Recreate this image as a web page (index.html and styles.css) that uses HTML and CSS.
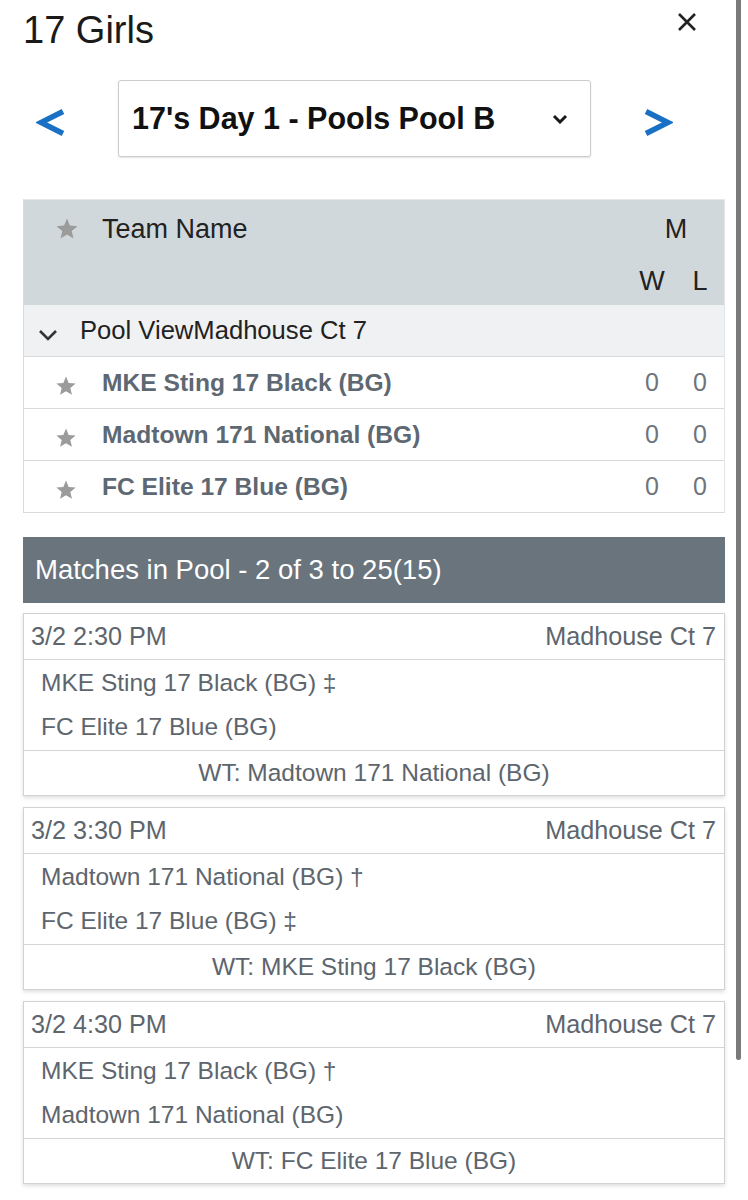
FILE: index.html
```html
<!DOCTYPE html>
<html lang="en">
<head>
<meta charset="utf-8">
<title>17 Girls</title>
<link rel="stylesheet" href="styles.css">
</head>
<body>
<div class="page">
  <div class="scroll-thumb"></div>

  <header class="top">
    <h1 class="title">17 Girls</h1>
    <svg class="close" width="20" height="20" viewBox="0 0 20 20"><path d="M2 2 L18 18 M18 2 L2 18" stroke="#222" stroke-width="2.6" fill="none"/></svg>
  </header>

  <div class="nav">
    <svg class="arrow arrow-left" width="30" height="29" viewBox="0 0 30 29"><polyline points="27,3.5 5,14.5 27,25.5" fill="none" stroke="#1a70c4" stroke-width="5.5" stroke-linejoin="miter"/></svg>
    <div class="select">
      <span class="select-text">17's Day 1 - Pools Pool B</span>
      <svg class="select-chev" width="16" height="10" viewBox="0 0 16 10"><polyline points="2,2 8,8 14,2" fill="none" stroke="#1a1a1a" stroke-width="3"/></svg>
    </div>
    <svg class="arrow arrow-right" width="30" height="29" viewBox="0 0 30 29"><polyline points="3,3.5 25,14.5 3,25.5" fill="none" stroke="#1a70c4" stroke-width="5.5" stroke-linejoin="miter"/></svg>
  </div>

  <div class="standings">
    <div class="thead">
      <div class="thead-row1">
        <span class="star-cell"><svg class="star" width="24" height="24" viewBox="0 0 24 24"><polygon points="12,1.5 14.9,8.6 22.5,9.2 16.7,14.1 18.5,21.6 12,17.6 5.5,21.6 7.3,14.1 1.5,9.2 9.1,8.6"/></svg></span>
        <span class="th-name">Team Name</span>
        <span class="th-m">M</span>
      </div>
      <div class="thead-row2">
        <span class="th-spacer"></span>
        <span class="col th-col">W</span>
        <span class="col th-col">L</span>
      </div>
    </div>

    <div class="pool-row">
      <svg class="pool-chev" width="20" height="12" viewBox="0 0 20 12"><polyline points="2,2 10,10 18,2" fill="none" stroke="#333" stroke-width="2.6"/></svg>
      <span class="pool-text">Pool ViewMadhouse Ct 7</span>
    </div>

    <div class="team-row">
      <span class="star-cell"><svg class="star row-star" width="22" height="22" viewBox="0 0 24 24"><polygon points="12,1.5 14.9,8.6 22.5,9.2 16.7,14.1 18.5,21.6 12,17.6 5.5,21.6 7.3,14.1 1.5,9.2 9.1,8.6"/></svg></span>
      <span class="team-name">MKE Sting 17 Black (BG)</span>
      <span class="col num">0</span>
      <span class="col num">0</span>
    </div>
    <div class="team-row">
      <span class="star-cell"><svg class="star row-star" width="22" height="22" viewBox="0 0 24 24"><polygon points="12,1.5 14.9,8.6 22.5,9.2 16.7,14.1 18.5,21.6 12,17.6 5.5,21.6 7.3,14.1 1.5,9.2 9.1,8.6"/></svg></span>
      <span class="team-name">Madtown 171 National (BG)</span>
      <span class="col num">0</span>
      <span class="col num">0</span>
    </div>
    <div class="team-row">
      <span class="star-cell"><svg class="star row-star" width="22" height="22" viewBox="0 0 24 24"><polygon points="12,1.5 14.9,8.6 22.5,9.2 16.7,14.1 18.5,21.6 12,17.6 5.5,21.6 7.3,14.1 1.5,9.2 9.1,8.6"/></svg></span>
      <span class="team-name">FC Elite 17 Blue (BG)</span>
      <span class="col num">0</span>
      <span class="col num">0</span>
    </div>
  </div>

  <div class="matches-head">Matches in Pool - 2 of 3 to 25(15)</div>

  <div class="match">
    <div class="match-head"><span>3/2 2:30 PM</span><span>Madhouse Ct 7</span></div>
    <div class="match-teams">
      <div class="match-team">MKE Sting 17 Black (BG) ‡</div>
      <div class="match-team">FC Elite 17 Blue (BG)</div>
    </div>
    <div class="match-wt">WT: Madtown 171 National (BG)</div>
  </div>

  <div class="match">
    <div class="match-head"><span>3/2 3:30 PM</span><span>Madhouse Ct 7</span></div>
    <div class="match-teams">
      <div class="match-team">Madtown 171 National (BG) †</div>
      <div class="match-team">FC Elite 17 Blue (BG) ‡</div>
    </div>
    <div class="match-wt">WT: MKE Sting 17 Black (BG)</div>
  </div>

  <div class="match">
    <div class="match-head"><span>3/2 4:30 PM</span><span>Madhouse Ct 7</span></div>
    <div class="match-teams">
      <div class="match-team">MKE Sting 17 Black (BG) †</div>
      <div class="match-team">Madtown 171 National (BG)</div>
    </div>
    <div class="match-wt">WT: FC Elite 17 Blue (BG)</div>
  </div>
</div>
</body>
</html>
```

FILE: styles.css
```css
* { box-sizing: border-box; }

html, body {
  margin: 0;
  padding: 0;
  background: #ffffff;
}

body {
  font-family: "Liberation Sans", Arial, Helvetica, sans-serif;
  color: #1f1f1f;
}

.page {
  position: relative;
  width: 748px;
  min-height: 1200px;
  padding: 0 23px 0 23px;
  overflow: hidden;
}

.scroll-thumb {
  position: absolute;
  top: 0;
  right: 7px;
  width: 5px;
  height: 1060px;
  background: #7a7a7a;
  border-radius: 0 0 3px 3px;
}

/* Top bar */
.top {
  display: flex;
  justify-content: space-between;
  align-items: flex-start;
  height: 60px;
}

.title {
  margin: 0 0 0 0;
  font-size: 38px;
  font-weight: 400;
  line-height: 60px;
  color: #1a1a1a;
}

.close {
  display: block;
  margin-top: 12px;
  margin-right: 28px;
}

/* Navigation */
.nav {
  display: flex;
  align-items: center;
  height: 77px;
  margin-top: 20px;
}

.arrow {
  display: block;
  flex: none;
  margin-top: 8px;
}

.arrow-left { margin-left: 13px; }

.arrow-right { margin-left: 52px; }

.select {
  display: flex;
  align-items: center;
  justify-content: space-between;
  width: 473px;
  height: 77px;
  margin-left: 52px;
  padding: 0 22px 0 13px;
  border: 1px solid #cdcdcd;
  border-radius: 3px;
  box-shadow: 0 1px 2px rgba(0, 0, 0, 0.12);
  background: #fff;
}

.select-text {
  font-size: 30.5px;
  font-weight: 700;
  color: #111;
  white-space: nowrap;
}

.select-chev { display: block; }

/* Standings table */
.standings {
  margin-top: 42px;
  border-top: 1px solid #e6e8ea;
  border-left: 1px solid #d6dadd;
  border-right: 1px solid #e2e5e7;
}

.thead {
  background: #d1d8dc;
  height: 105px;
}

.thead-row1 {
  display: flex;
  align-items: center;
  height: 58px;
}

.thead-row2 {
  display: flex;
  align-items: center;
  height: 47px;
}

.star-cell {
  display: flex;
  align-items: center;
  flex: none;
  width: 78px;
  padding-left: 31px;
}

.star {
  display: block;
  fill: #9b9b9b;
}

.row-star { margin-top: 6px; }

.th-name {
  flex: 1;
  font-size: 27px;
  color: #222;
}

.th-m {
  width: 96px;
  text-align: center;
  font-size: 27px;
  color: #222;
}

.th-spacer { flex: 1; }

.col {
  flex: none;
  width: 48px;
  text-align: center;
}

.th-col {
  font-size: 27px;
  color: #222;
}

.pool-row {
  display: flex;
  align-items: center;
  height: 52px;
  background: #f0f1f3;
  border-bottom: 1px solid #d8dcdf;
}

.pool-chev {
  display: block;
  margin-left: 14px;
  margin-top: 8px;
}

.pool-text {
  margin-left: 22px;
  font-size: 25.6px;
  color: #222;
}

.team-row {
  display: flex;
  align-items: center;
  height: 52px;
  border-bottom: 1px solid #d8dcdf;
}

.team-name {
  flex: 1;
  font-size: 24.6px;
  font-weight: 700;
  color: #5d6872;
}

.num {
  font-size: 25px;
  color: #6c757e;
}

/* Matches */
.matches-head {
  margin-top: 24px;
  height: 66px;
  padding-left: 12px;
  background: #69747d;
  color: #ffffff;
  font-size: 27.5px;
  line-height: 66px;
}

.match {
  margin-top: 10px;
  border: 1px solid #cfd3d6;
  box-shadow: 0 2px 4px rgba(0, 0, 0, 0.13);
  color: #5d656d;
  font-size: 24.5px;
}

.match + .match { margin-top: 11px; }

.match-head {
  display: flex;
  justify-content: space-between;
  align-items: center;
  height: 46px;
  padding: 0 8px 0 7px;
  font-size: 25.2px;
  border-bottom: 1px solid #d2d6d9;
}

.match-teams {
  padding: 1px 0 1px 17px;
  border-bottom: 1px solid #d2d6d9;
}

.match-team {
  height: 44px;
  line-height: 44px;
}

.match-wt {
  height: 44px;
  line-height: 44px;
  text-align: center;
}
```
